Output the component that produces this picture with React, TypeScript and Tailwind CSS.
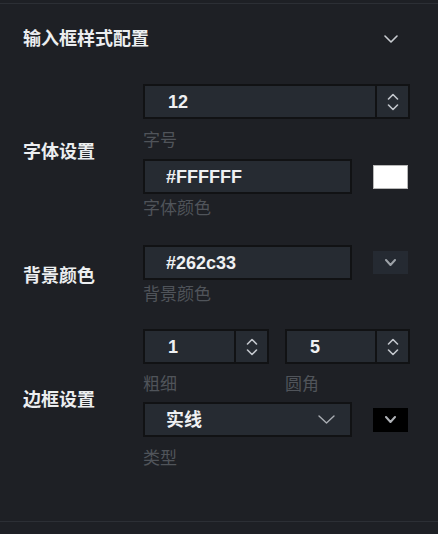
import React from 'react';

const FONT = '[font-family:"Liberation_Sans","Noto_Sans_CJK_SC",sans-serif]';

const ChevronDown: React.FC<{ className?: string; w?: number; h?: number; stroke?: number }> = ({ className, w = 14, h = 8, stroke = 1.6 }) => (
  <svg width={w} height={h} viewBox={`0 0 ${w} ${h}`} className={className} fill="none">
    <path d={`M1 1 L${w / 2} ${h - 1} L${w - 1} 1`} stroke="currentColor" strokeWidth={stroke} strokeLinecap="round" strokeLinejoin="round" />
  </svg>
);

const Spinner: React.FC = () => (
  <div className="w-[33px] h-full border-l-2 border-[#111214] flex flex-col items-center justify-center gap-[4px] text-[#c3c7cd]">
    <svg width="12" height="7" viewBox="0 0 12 7" fill="none">
      <path d="M1.5 6 L6 1.5 L10.5 6" stroke="currentColor" strokeWidth="1.6" strokeLinecap="round" strokeLinejoin="round" />
    </svg>
    <svg width="12" height="7" viewBox="0 0 12 7" fill="none">
      <path d="M1.5 1 L6 5.5 L10.5 1" stroke="currentColor" strokeWidth="1.6" strokeLinecap="round" strokeLinejoin="round" />
    </svg>
  </div>
);

const NumberInput: React.FC<{ value: string; className?: string }> = ({ value, className }) => (
  <div className={`h-[35px] flex items-center bg-[#262b32] border-2 border-[#111214] ${className ?? ''}`}>
    <span className="flex-1 pl-[23px] text-[18px] font-bold text-[#eef0f2] leading-none">{value}</span>
    <Spinner />
  </div>
);

const TextInput: React.FC<{ value: string }> = ({ value }) => (
  <div className="w-[209px] h-[35px] flex items-center bg-[#262b32] border-2 border-[#111214]">
    <span className="pl-[21px] text-[18px] font-bold text-[#eef0f2] leading-none">{value}</span>
  </div>
);

const SubLabel: React.FC<{ text: string; className?: string }> = ({ text, className }) => (
  <div className={`h-[24px] leading-[24px] text-[17px] text-[#50545a] ${className ?? ''}`}>{text}</div>
);

const RowLabel: React.FC<{ text: string }> = ({ text }) => (
  <div className="w-[143px] shrink-0 pl-[23px] text-[18px] font-bold text-[#eceef0]">{text}</div>
);

export default function App() {
  return (
    <div className={`w-[438px] h-[534px] bg-[#1e2025] overflow-hidden ${FONT}`}>
      <div className="h-[3px]" />
      <div className="border-t border-[#2c2f35]" />

      <div className="h-[70px] flex items-center justify-between pl-[23px] pr-[40px]">
        <span className="text-[18px] font-bold text-[#eceef0]">输入框样式配置</span>
        <ChevronDown className="text-[#c9ccd1]" w={14} h={8} stroke={1.6} />
      </div>

      <div className="mt-[10px] flex items-center">
        <RowLabel text="字体设置" />
        <div className="flex flex-col">
          <NumberInput value="12" className="w-[267px]" />
          <SubLabel text="字号" className="mt-[10px]" />
          <div className="mt-[6px] flex items-center gap-[21px]">
            <TextInput value="#FFFFFF" />
            <div className="w-[35px] h-[24px] bg-white border border-[#b8b8b8]" />
          </div>
          <SubLabel text="字体颜色" className="mt-[3px]" />
        </div>
      </div>

      <div className="mt-[24px] flex items-center">
        <RowLabel text="背景颜色" />
        <div className="flex flex-col">
          <div className="flex items-center gap-[21px]">
            <TextInput value="#262c33" />
            <div className="w-[35px] h-[23px] bg-[#252a32] flex items-center justify-center text-[#9da2a8]">
              <ChevronDown w={11} h={7} stroke={2} />
            </div>
          </div>
          <SubLabel text="背景颜色" className="mt-[3px]" />
        </div>
      </div>

      <div className="mt-[22px] flex items-center">
        <RowLabel text="边框设置" />
        <div className="flex flex-col">
          <div className="flex gap-[16px]">
            <NumberInput value="1" className="w-[126px]" />
            <NumberInput value="5" className="w-[125px]" />
          </div>
          <div className="mt-[9px] flex gap-[16px]">
            <SubLabel text="粗细" className="w-[126px]" />
            <SubLabel text="圆角" />
          </div>
          <div className="mt-[5px] flex items-center gap-[21px]">
            <div className="w-[209px] h-[35px] flex items-center justify-between bg-[#262b32] border-2 border-[#111214] pl-[21px] pr-[15px]">
              <span className="text-[18px] font-bold text-[#eef0f2] leading-none">实线</span>
              <ChevronDown className="text-[#a9adb3]" w={17} h={9} stroke={1.4} />
            </div>
            <div className="w-[35px] h-[24px] bg-black flex items-center justify-center text-[#b0b3b8]">
              <ChevronDown w={11} h={7} stroke={2} />
            </div>
          </div>
          <SubLabel text="类型" className="mt-[10px]" />
        </div>
      </div>

      <div className="mt-[50px] border-t border-[#2c2f35]" />
    </div>
  );
}
